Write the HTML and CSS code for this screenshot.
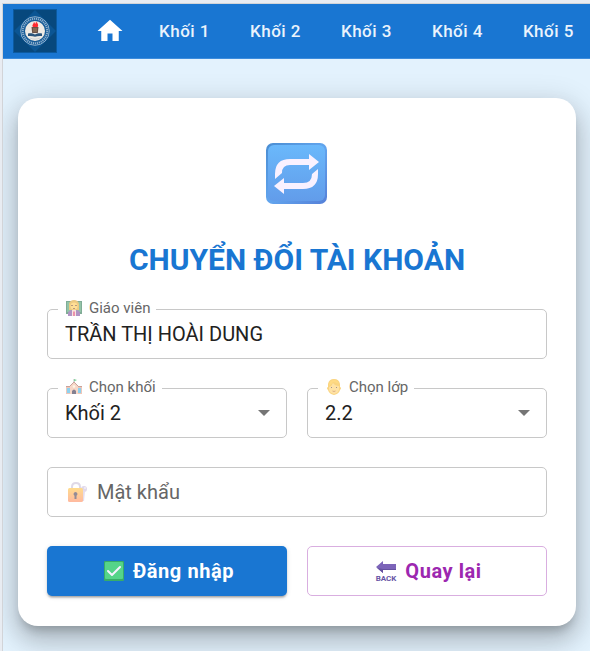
FILE: index.html
```html
<!DOCTYPE html>
<html lang="vi">
<head>
<meta charset="utf-8">
<meta name="viewport" content="width=device-width, initial-scale=1">
<title>Chuyển đổi tài khoản</title>
<link rel="stylesheet" href="styles.css">
</head>
<body>
<div class="app">
  <header class="navbar">
    <a class="brand" href="#" aria-label="Logo">
      <svg class="brand-logo" viewBox="0 0 44 44" aria-hidden="true">
        <rect width="44" height="44" fill="#0b5aa0"/>
        <rect x="1" y="1" width="42" height="42" fill="#07487d"/>
        <path d="M22 1 43 22 22 43 1 22z" fill="#0b5593"/>
        <circle cx="22" cy="22" r="14.3" fill="#165b97" stroke="#a9c4da" stroke-width=".8"/>
        <circle cx="22" cy="22" r="12.2" fill="none" stroke="#8fb0cd" stroke-width="2" stroke-dasharray="1.2 .8"/>
        <circle cx="22" cy="22" r="10" fill="#eeeae4"/>
        <path d="M20 18c-1.500-2 .5-2.600 1-5 .8.700 1 1.300 1 2 .8-.7 1-1.500.9-2.500 2 1.700 3 4 1.700 5.500z" fill="#ff2930"/>
        <path d="M18.500 18h7l-.7 6h-5.600z" fill="#695048"/>
        <path d="M20 20h4M20 22h4" stroke="#b89a68" stroke-width=".7"/>
        <path d="M15 24.500c3-.5 5 0 7 1 2-1 4-1.500 7-1V27c-3-.3-5 0-7 .8-2-.8-4-1.100-7-.8z" fill="#2b557c"/>
        <path d="M17 29c3 1.500 7 1.500 10 0" fill="none" stroke="#c3ccd3" stroke-width=".8"/>
      </svg>
    </a>
    <nav class="nav-links" aria-label="Khối lớp">
      <a class="nav-home" href="#" aria-label="Trang chủ">
        <svg class="home-icon" viewBox="0 0 24 24" aria-hidden="true"><path d="M10 20v-6h4v6h5v-8h3L12 3 2 12h3v8z" fill="#fff"/></svg>
      </a>
      <a class="nav-link" href="#">Khối 1</a>
      <a class="nav-link" href="#">Khối 2</a>
      <a class="nav-link" href="#">Khối 3</a>
      <a class="nav-link" href="#">Khối 4</a>
      <a class="nav-link" href="#">Khối 5</a>
    </nav>
  </header>

  <main class="page">
    <form class="card">
      <svg class="hero-icon" viewBox="0 0 62 62" aria-hidden="true">
        <defs>
          <linearGradient id="tile" x1="0" y1="0" x2="0" y2="1">
            <stop offset="0" stop-color="#6ab8fb"/><stop offset="1" stop-color="#629cea"/>
          </linearGradient>
          <linearGradient id="tileEdge" x1="0" y1="0" x2="1" y2="1">
            <stop offset="0" stop-color="#4a8dd2"/><stop offset=".5" stop-color="#62a5ee"/><stop offset="1" stop-color="#5580d8"/>
          </linearGradient>
        </defs>
        <rect y="1" width="61" height="61" rx="7" fill="url(#tileEdge)"/>
        <rect x="2" y="3" width="57" height="56" rx="6" fill="url(#tile)"/>
        <path d="M9 37V32Q9 17 24 17H43V12L53 20 43 28V23H24Q16 23 16 31z" fill="#f9f1ff"/>
        <path d="M52 27V32Q52 47 37 47H18V52L8 44 18 36V41H37Q46 41 46 32z" fill="#f9f1ff"/>
      </svg>
      <h1 class="title">CHUYỂN ĐỔI TÀI KHOẢN</h1>

      <div class="field">
        <input class="control" id="teacher" type="text" value="TRẦN THỊ HOÀI DUNG">
        <label class="label" for="teacher">
          <svg class="label-icon" viewBox="0 0 16 16" aria-hidden="true">
            <path d="M0 1h16v13H0z" fill="#2d7651"/><path d="M1 2h14v10H1z" fill="#4d9d6e"/>
            <path d="M2 16v-3q1-3 4-3h4q3 0 4 3v3z" fill="#7c4e9e"/><path d="M6 10h4v6H6z" fill="#f5d5ca"/><path d="m7 12 1-1 1 1v4H7z" fill="#e14b76"/>
            <path d="M3 10V4q1-4 5-4t5 4v6z" fill="#e1a62e"/><circle cx="8" cy="6" r="3.600" fill="#ffc94e"/><path d="M5 5h2v1H5zm4 0h2v1H9zM7 8h2v1H7z" fill="#87562d"/>
          </svg>
          <span>Giáo viên</span>
        </label>
      </div>

      <div class="row">
        <div class="field">
          <select class="control select" id="grade"><option>Khối 2</option></select>
          <svg class="arrow" viewBox="0 0 12 6" aria-hidden="true"><path d="m0 0 6 6 6-6z" fill="#757575"/></svg>
          <label class="label" for="grade">
            <svg class="label-icon" viewBox="0 0 16 16" aria-hidden="true">
              <path d="M8 0v5" stroke="#777" stroke-width=".8"/><path d="m8 0 3 1-3 1.500z" fill="#30b45c"/>
              <path d="M0 8h5v7H0zm11 0h5v7h-5z" fill="#e4a28c"/><path d="M0 7h5v1H0zm11 0h5v1h-5z" fill="#a76355"/>
              <path d="M1 9h3v5H1zm11 0h3v5h-3z" fill="#43b3e6"/><path d="M4 7l4-4 4 4v8H4z" fill="#f3bea5"/>
              <path d="m3.500 7.500 4.500-4.500 4.500 4.500" fill="none" stroke="#a76559"/><circle cx="8" cy="7.500" r="1.300" fill="#fff1da"/><path d="M6 15v-3q2-3 4 0v3z" fill="#322c49"/>
            </svg>
            <span>Chọn khối</span>
          </label>
        </div>
        <div class="field">
          <select class="control select" id="class"><option>2.2</option></select>
          <svg class="arrow" viewBox="0 0 12 6" aria-hidden="true"><path d="m0 0 6 6 6-6z" fill="#757575"/></svg>
          <label class="label" for="class">
            <svg class="label-icon" viewBox="0 0 16 16" aria-hidden="true">
              <path d="M2 8q-2 1 0 3 1 4 6 5 5-1 6-5 2-2 0-3V5q-1-5-6-5T2 5z" fill="#f7b82c"/>
              <path d="M3 8q3-1 4-4 2 3 6 3v3q0 4-5 5-5-1-5-5z" fill="#ffd06a"/><path d="M3 5q1-4 5-4 4 0 5 4-4-2-6-2-1 2-4 4z" fill="#ffc332"/>
              <path d="M5 8h1v1H5zm5 0h1v1h-1z" fill="#675043"/><path d="M6.500 12q1.500 1 3 0" fill="none" stroke="#c57b38"/>
            </svg>
            <span>Chọn lớp</span>
          </label>
        </div>
      </div>

      <div class="field">
        <input class="control" id="password" type="password" required>
        <label class="label label-inside" for="password">
          <svg class="lock-icon" viewBox="0 0 20 20" aria-hidden="true">
            <defs><linearGradient id="lock" x1="0" y1="0" x2="0" y2="1"><stop offset="0" stop-color="#ffc542"/><stop offset="1" stop-color="#ff8c61"/></linearGradient></defs>
            <path d="M4 8V5q0-4 4-4t4 4v3" fill="none" stroke="#cbc1d8" stroke-width="2"/>
            <circle cx="16" cy="7" r="3" fill="#cdbfdd"/><path d="m15 8 2 1-1 10h-3z" fill="#d4c5e1"/><circle cx="17" cy="6" r=".8" fill="#fff"/>
            <rect y="6" width="15" height="14" rx="1.500" fill="url(#lock)"/>
            <path d="M7.500 10a2 2 0 0 1 1 3.700V17h-2v-3.300a2 2 0 0 1 1-3.700z" fill="#4d3f52"/>
          </svg>
          <span>Mật khẩu</span>
        </label>
      </div>

      <div class="row">
        <button class="button button-primary" type="submit">
          <svg class="button-icon" viewBox="0 0 20 20" aria-hidden="true">
            <rect width="20" height="20" rx="1" fill="#38ad68"/><rect x="1" y="1" width="18" height="17" rx="1" fill="#55d489"/>
            <path d="m4 10 4 4 8-8" fill="none" stroke="#f6f2ff" stroke-width="2" stroke-linecap="round" stroke-linejoin="round"/>
          </svg>
          <span>Đăng nhập</span>
        </button>
        <button class="button button-outline" type="button">
          <svg class="button-icon" viewBox="0 0 20 20" aria-hidden="true">
            <path d="M0 6 7 0v3h13v6H7v3z" fill="#7c64b9"/><path d="M7 8h13v1H7v3L1 7z" fill="#6552a0"/>
            <text class="back-word" x="10" y="20" text-anchor="middle">BACK</text>
          </svg>
          <span>Quay lại</span>
        </button>
      </div>
    </form>
  </main>
</div>
</body>
</html>
```
FILE: styles.css
```css
* {
  box-sizing: border-box;
}

body {
  margin: 0;
  padding: 3px 0 0 2px;
  min-height: 100vh;
  display: flex;
  background: #e8ecf2;
  color: #212121;
  font-family: Roboto, sans-serif;
}

.app {
  flex: 1;
  min-width: 0;
  display: flex;
  flex-direction: column;
  overflow: hidden;
  border-top: 1px solid #d2d4d8;
  border-left: 1px solid #d2d4d8;
  background: #e3f2fd;
}

.navbar {
  display: flex;
  align-items: center;
  height: 55px;
  padding-left: 10px;
  border-bottom: 1px solid #3c8cdd;
  background: #1976d2;
}

.brand-logo {
  display: block;
  width: 44px;
  height: 44px;
}

.nav-links {
  display: flex;
  align-items: center;
  gap: 40px;
  margin-left: 38px;
}

.nav-home {
  margin-right: -6px;
}

.home-icon {
  display: block;
  width: 30px;
  height: 30px;
}

.nav-link {
  flex: none;
  color: #eaf3fc;
  font-size: 17px;
  font-weight: 500;
  line-height: 24px;
  letter-spacing: 0.02857em;
  text-decoration: none;
}

.page {
  flex: 1;
  padding: 39px 14px 25px 15px;
}

.card {
  display: flex;
  flex-direction: column;
  gap: 29px;
  padding: 44px 29px 30px;
  border-radius: 20px;
  background: #fff;
  box-shadow: 0 8px 10px -4px rgba(0, 0, 0, 0.2),
    0 16px 24px 2px rgba(0, 0, 0, 0.14),
    0 6px 28px 5px rgba(0, 0, 0, 0.12);
}

.hero-icon {
  align-self: center;
  width: 62px;
  height: 62px;
}

.title {
  margin: 7px 0 0;
  color: #1976d2;
  font-size: 30px;
  font-weight: 700;
  line-height: 40px;
  text-align: center;
}

.row {
  display: grid;
  grid-template-columns: 1fr 1fr;
  gap: 20px;
}

.field {
  position: relative;
}

.control {
  display: block;
  width: 100%;
  height: 50px;
  padding: 0 17px;
  border: 1px solid #c8c8c8;
  border-radius: 5px;
  outline: none;
  background: #fff;
  color: #212121;
  font-family: inherit;
  font-size: 20px;
}

.control:focus {
  border-color: #1976d2;
}

.select {
  appearance: none;
}

.arrow {
  position: absolute;
  top: 22px;
  right: 17px;
  width: 12px;
  height: 6px;
  pointer-events: none;
}

.label {
  position: absolute;
  top: -10px;
  left: 11px;
  display: flex;
  align-items: center;
  gap: 7px;
  padding: 0 6px 0 8px;
  background: #fff;
  color: #666;
  font-size: 15px;
  line-height: 18px;
}

.label-icon {
  width: 16px;
  height: 16px;
  opacity: 0.6;
}

.label-inside {
  top: 13px;
  left: 13px;
  gap: 9px;
  font-size: 20px;
  line-height: 24px;
}

.control:focus + .label-inside,
.control:valid + .label-inside {
  top: -10px;
  font-size: 15px;
  line-height: 18px;
}

.lock-icon {
  width: 20px;
  height: 20px;
  opacity: 0.6;
}

.button {
  display: flex;
  align-items: center;
  justify-content: center;
  gap: 9px;
  height: 50px;
  padding: 0 6px 0 10px;
  border: 1px solid transparent;
  border-radius: 5px;
  font-family: inherit;
  font-size: 20px;
  font-weight: 700;
  letter-spacing: 0.02857em;
  cursor: pointer;
}

.button-primary {
  background: #1976d2;
  color: #fff;
  box-shadow: 0 3px 2px -2px rgba(0, 0, 0, 0.2),
    0 2px 2px rgba(0, 0, 0, 0.14),
    0 1px 5px rgba(0, 0, 0, 0.12);
}

.button-outline {
  border-color: #d9aee0;
  background: #fff;
  color: #9c27b0;
}

.button-icon {
  width: 20px;
  height: 20px;
  overflow: visible;
}

.back-word {
  fill: #6755a5;
  font-size: 8px;
  font-weight: 700;
  letter-spacing: 0;
}
```
